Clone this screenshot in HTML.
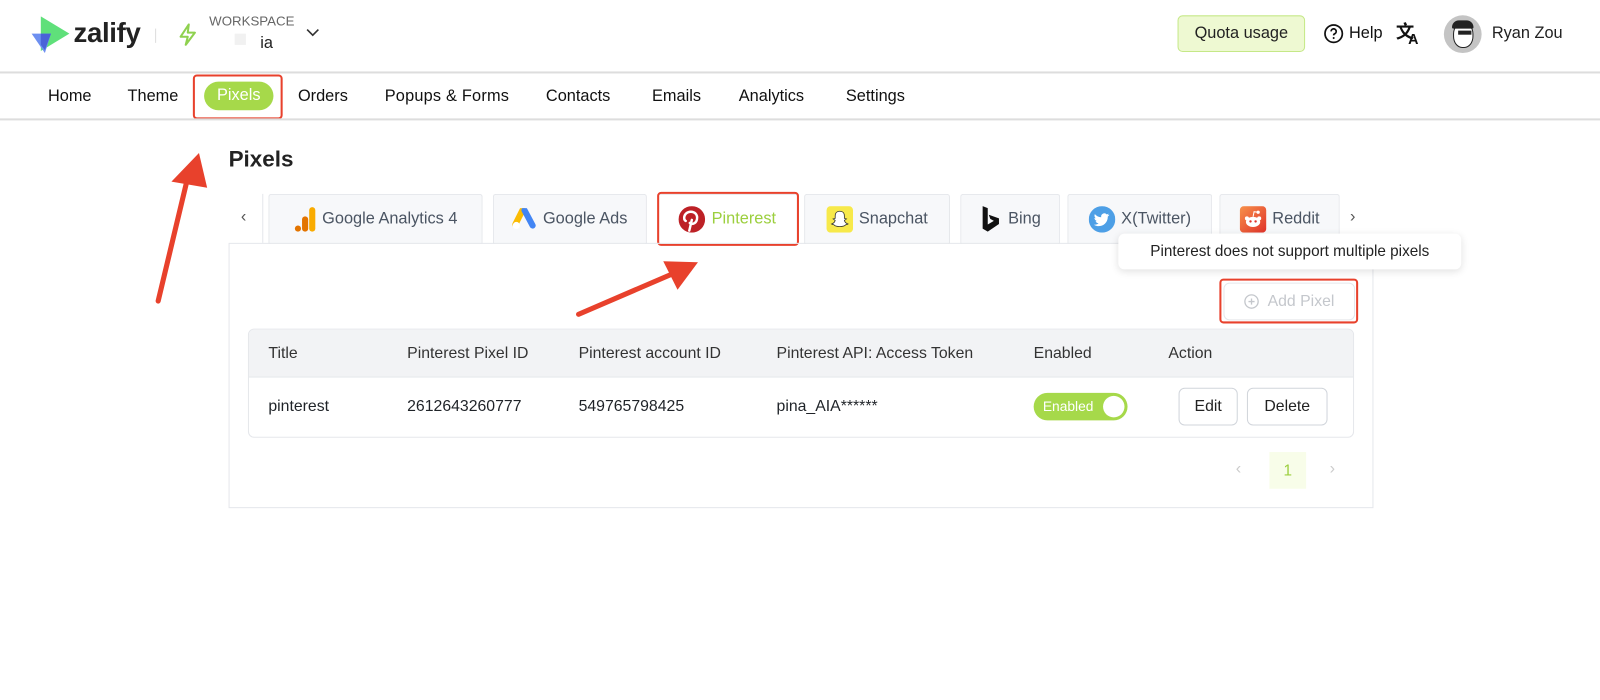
<!DOCTYPE html>
<html><head><meta charset="utf-8"><style>
*{box-sizing:border-box;margin:0;padding:0}
html,body{width:1600px;height:700px;overflow:hidden;background:#fff}
body{font-family:"Liberation Sans",sans-serif;color:#1f2328}
#w{position:absolute;left:0;top:0;width:1568px;height:686px;transform:scale(1.0204);transform-origin:0 0}
.a{position:absolute}
.nav{font-size:16px;font-weight:500;top:86px;color:#111}
.tab{position:absolute;top:190px;height:49px;border:1px solid #e5e7eb;border-bottom:none;background:#f7f8fa;border-radius:3px 3px 0 0;display:flex;align-items:center;justify-content:center;gap:6px;font-size:16px;color:#4b5563}
.th{position:absolute;top:338px;font-size:15.5px;color:#333}
.td{position:absolute;top:390px;font-size:15.5px;color:#1f2328}
.btn{position:absolute;border:1px solid #d1d5db;border-radius:6px;background:#fff;font-size:15.5px;display:flex;align-items:center;justify-content:center;color:#222}
.red{position:absolute;border:2.5px solid #e8412c;border-radius:4px}
</style></head><body><div id="w">
<!-- header -->
<svg class="a" style="left:30px;top:16px" width="40" height="36" viewBox="0 0 40 36"><path d="M10 0 L38 17 L10 34 Z" fill="#5fe07a"/><path d="M1 17 L20 17 L14 36 Z" fill="#6d8ff0"/><path d="M10 17 L20 17 L14 33 L10 28Z" fill="#4a63d8"/></svg>
<div class="a" style="left:72px;top:17px;font-size:27px;font-weight:700;color:#222;letter-spacing:-0.3px">zalify</div>
<div class="a" style="left:152px;top:28px;width:1px;height:14px;background:#ddd"></div>
<svg class="a" style="left:175px;top:23px" width="18" height="22" viewBox="0 0 18 22"><path d="M10 1 L2 13 H9 L7 21 L16 9 H9 Z" fill="none" stroke="#8fd14f" stroke-width="2" stroke-linejoin="round"/></svg>
<div class="a" style="left:205px;top:13px;font-size:13px;color:#666">WORKSPACE</div>
<div class="a" style="left:230px;top:33px;width:11px;height:11px;background:#f1f1f1"></div>
<div class="a" style="left:255px;top:34px;font-size:16px;color:#222">ia</div>
<svg class="a" style="left:300px;top:28px" width="13" height="9" viewBox="0 0 13 9"><path d="M1 1 L6.5 6.5 L12 1" fill="none" stroke="#333" stroke-width="1.6"/></svg>
<div class="a" style="left:1154px;top:15px;width:125px;height:36px;background:#eef9d2;border:1.5px solid #c5e887;border-radius:5px;font-size:16px;display:flex;align-items:center;justify-content:center;color:#222">Quota usage</div>
<svg class="a" style="left:1297px;top:23px" width="20" height="20" viewBox="0 0 20 20"><circle cx="10" cy="10" r="8.5" fill="none" stroke="#111" stroke-width="1.7"/><path d="M7.5 7.8a2.5 2.5 0 1 1 3.5 2.3c-.8.4-1 .9-1 1.6" fill="none" stroke="#111" stroke-width="1.7"/><circle cx="10" cy="14.3" r="1" fill="#111"/></svg>
<div class="a" style="left:1322px;top:24px;font-size:16px;font-weight:500;color:#111">Help</div>
<div class="a" style="left:1368px;top:21px;font-size:18px;font-weight:700;color:#111;font-family:'Noto Sans CJK SC',sans-serif;line-height:18px">文</div>
<div class="a" style="left:1380px;top:30px;font-size:14px;font-weight:700;color:#111">A</div>
<div class="a" style="left:1415px;top:15px;width:37px;height:37px;border-radius:50%;background:#c4c4c4;overflow:hidden"><div class="a" style="left:9px;top:7px;width:20px;height:25px;border-radius:45%;background:#fff;border:1.5px solid #222"></div><div class="a" style="left:8px;top:5px;width:21px;height:8px;border-radius:10px 10px 2px 2px;background:#222"></div><div class="a" style="left:14px;top:15px;width:13px;height:4px;background:#222"></div></div>
<div class="a" style="left:1462px;top:24px;font-size:16px;color:#222">Ryan Zou</div>
<div class="a" style="left:0;top:70px;width:1568px;height:1.5px;background:#ddd"></div>
<!-- nav -->
<div class="a nav" style="left:47px">Home</div>
<div class="a nav" style="left:125px">Theme</div>
<div class="a" style="left:200px;top:80px;width:68px;height:28px;border-radius:14px;background:#a6d94a;color:#fff;font-size:16px;font-weight:500;display:flex;align-items:center;justify-content:center">Pixels</div>
<div class="red" style="left:189px;top:73px;width:88px;height:44px"></div>
<div class="a nav" style="left:292px">Orders</div>
<div class="a nav" style="left:377px;letter-spacing:0.2px">Popups &amp; Forms</div>
<div class="a nav" style="left:535px">Contacts</div>
<div class="a nav" style="left:639px">Emails</div>
<div class="a nav" style="left:724px">Analytics</div>
<div class="a nav" style="left:829px">Settings</div>
<div class="a" style="left:0;top:116px;width:1568px;height:1.5px;background:#ddd"></div>
<div class="a" style="left:224px;top:143px;font-size:22px;font-weight:700;color:#222">Pixels</div>
<!-- tabs -->
<div class="a" style="left:236px;top:204px;font-size:16px;color:#555">‹</div>
<div class="a" style="left:257px;top:190px;width:1px;height:48px;background:#e5e7eb"></div>
<div class="tab" style="left:263px;width:210px"><svg width="22" height="26" viewBox="0 0 22 26"><rect x="15" y="1" width="6" height="24" rx="3" fill="#f9ab00"/><rect x="8" y="10" width="6" height="15" rx="3" fill="#e37400"/><circle cx="4" cy="22" r="3" fill="#e37400"/></svg>Google Analytics 4</div>
<div class="tab" style="left:483px;width:151px"><svg width="24" height="22" viewBox="0 0 24 22"><path d="M10 2 L3 16" stroke="#fbbc04" stroke-width="6" stroke-linecap="round"/><path d="M12 2 L20 17" stroke="#4285f4" stroke-width="6" stroke-linecap="round"/><circle cx="4" cy="17" r="3.5" fill="#fff"/></svg>Google Ads</div>
<div class="tab" style="left:644px;width:138px;color:#9ccf3e;background:#fff"><svg width="26" height="26" viewBox="0 0 26 26"><circle cx="13" cy="13" r="13" fill="#bd2126"/><path d="M10.5 24 L13 13.5 M11 16.5c1 1.5 6 1.5 7-3.5 1-5-2.5-7.5-6-7.5-4 0-6.5 3-6.5 6 0 1.5.5 2.5 1.5 3" fill="none" stroke="#fff" stroke-width="2.4" stroke-linecap="round"/></svg>Pinterest</div>
<div class="red" style="left:644px;top:188px;width:139px;height:53px"></div>
<div class="tab" style="left:788px;width:143px"><svg width="26" height="26" viewBox="0 0 26 26"><rect width="26" height="26" rx="4" fill="#f7e94a"/><path d="M13 5c-3 0-4.5 2-4.5 4.5v2.5l-2 .5 2 1.5c-.5 2-2 3-3.5 3.5 1 .6 2 .5 2.5 1 .8 1 2.5 1.5 5.5 1.5s4.7-.5 5.5-1.5c.5-.5 1.5-.4 2.5-1-1.5-.5-3-1.5-3.5-3.5l2-1.5-2-.5V9.5C17.5 7 16 5 13 5z" fill="#fff" stroke="#333" stroke-width=".8"/></svg>Snapchat</div>
<div class="tab" style="left:941px;width:98px"><svg width="22" height="28" viewBox="0 0 22 28"><path d="M3 1 L8 3 V19 L14 15.5 L10.5 13.5 L9 9.5 L19 13 V18.5 L8 26 L3 23 Z" fill="#111"/></svg>Bing</div>
<div class="tab" style="left:1046px;width:142px"><svg width="26" height="26" viewBox="0 0 26 26"><circle cx="13" cy="13" r="13" fill="#4d9fe6"/><path d="M20 8.5c-.6.3-1.2.4-1.8.5.7-.4 1.1-1 1.3-1.7-.6.4-1.3.6-2 .8a3.1 3.1 0 0 0-5.3 2.8C9.6 10.8 7.5 9.6 6 7.8c-.8 1.4-.3 3.2 1 4.1-.5 0-1-.2-1.4-.4 0 1.5 1.1 2.8 2.5 3.1-.5.1-1 .2-1.4.1.4 1.300 1.6 2.1 2.9 2.2-1.3 1-3 1.5-4.6 1.3 1.4.9 3.1 1.4 4.8 1.4 5.8 0 9-4.9 8.8-9.3.6-.4 1.1-1 1.5-1.6z" fill="#fff"/></svg>X(Twitter)</div>
<div class="tab" style="left:1195px;width:118px"><svg width="26" height="26" viewBox="0 0 26 26"><defs><linearGradient id="rg" x1="0" y1="0" x2="1" y2="1"><stop offset="0" stop-color="#f7914a"/><stop offset="1" stop-color="#e0322a"/></linearGradient></defs><rect width="26" height="26" rx="4" fill="url(#rg)"/><ellipse cx="13" cy="15.5" rx="7" ry="5" fill="#fff"/><circle cx="7" cy="12" r="2" fill="#fff"/><circle cx="19" cy="12" r="2" fill="#fff"/><circle cx="18" cy="6" r="1.6" fill="#fff"/><path d="M13 10.5 L14 5.5 L18 6" stroke="#fff" fill="none"/><circle cx="10.5" cy="15" r="1.2" fill="#e0322a"/><circle cx="15.5" cy="15" r="1.2" fill="#e0322a"/></svg>Reddit</div>
<div class="a" style="left:1323px;top:204px;font-size:16px;color:#555">›</div>
<!-- card -->
<div class="a" style="left:224px;top:238px;width:1122px;height:260px;border:1px solid #e5e7eb"></div>
<div class="a" style="left:1096px;top:229px;width:336px;height:35px;background:#fff;border-radius:6px;box-shadow:0 2px 8px rgba(0,0,0,.12);font-size:15px;color:#222;display:flex;align-items:center;justify-content:center">Pinterest does not support multiple pixels</div>
<div class="btn" style="left:1199px;top:277px;width:129px;height:37px;color:#c4c7cc;border-color:#e5e7eb;gap:8px"><svg width="15" height="15" viewBox="0 0 15 15"><circle cx="7.5" cy="7.5" r="6.5" fill="none" stroke="#c4c7cc" stroke-width="1.3"/><path d="M7.5 4.5v6M4.5 7.5h6" stroke="#c4c7cc" stroke-width="1.3"/></svg>Add Pixel</div>
<div class="red" style="left:1195px;top:273px;width:136px;height:44px"></div>
<div class="a" style="left:243px;top:322px;width:1084px;height:107px;border:1px solid #e5e7eb;border-radius:6px;overflow:hidden"><div style="height:47px;background:#f2f3f5;border-bottom:1px solid #e5e7eb"></div></div>
<div class="th" style="left:263px">Title</div>
<div class="th" style="left:399px">Pinterest Pixel ID</div>
<div class="th" style="left:567px">Pinterest account ID</div>
<div class="th" style="left:761px">Pinterest API: Access Token</div>
<div class="th" style="left:1013px">Enabled</div>
<div class="th" style="left:1145px">Action</div>
<div class="td" style="left:263px">pinterest</div>
<div class="td" style="left:399px">2612643260777</div>
<div class="td" style="left:567px">549765798425</div>
<div class="td" style="left:761px">pina_AIA******</div>
<div class="a" style="left:1013px;top:385px;width:92px;height:27px;border-radius:14px;background:#a6d94a;color:#fff;font-size:13.5px;padding-left:9px;line-height:27px">Enabled<div class="a" style="left:68px;top:3px;width:21px;height:21px;border-radius:50%;background:#fff"></div></div>
<div class="btn" style="left:1155px;top:380px;width:58px;height:37px">Edit</div>
<div class="btn" style="left:1222px;top:380px;width:79px;height:37px">Delete</div>
<div class="a" style="left:1211px;top:451px;font-size:16px;color:#ccc">‹</div>
<div class="a" style="left:1244px;top:443px;width:36px;height:36px;background:#f8fde9;color:#9ccf3e;font-size:15px;display:flex;align-items:center;justify-content:center">1</div>
<div class="a" style="left:1303px;top:451px;font-size:16px;color:#ccc">›</div>
<!-- arrows -->
<svg class="a" style="left:0;top:0" width="1568" height="686"><path d="M155 295 L183 178" stroke="#e8412c" stroke-width="5" stroke-linecap="round"/><path d="M195 150 L203 184 L168 178 Z" fill="#e8412c"/><path d="M567 308 L660 268" stroke="#e8412c" stroke-width="5" stroke-linecap="round"/><path d="M684 257 L664 284 L650 256 Z" fill="#e8412c"/></svg>
</div></body></html>
